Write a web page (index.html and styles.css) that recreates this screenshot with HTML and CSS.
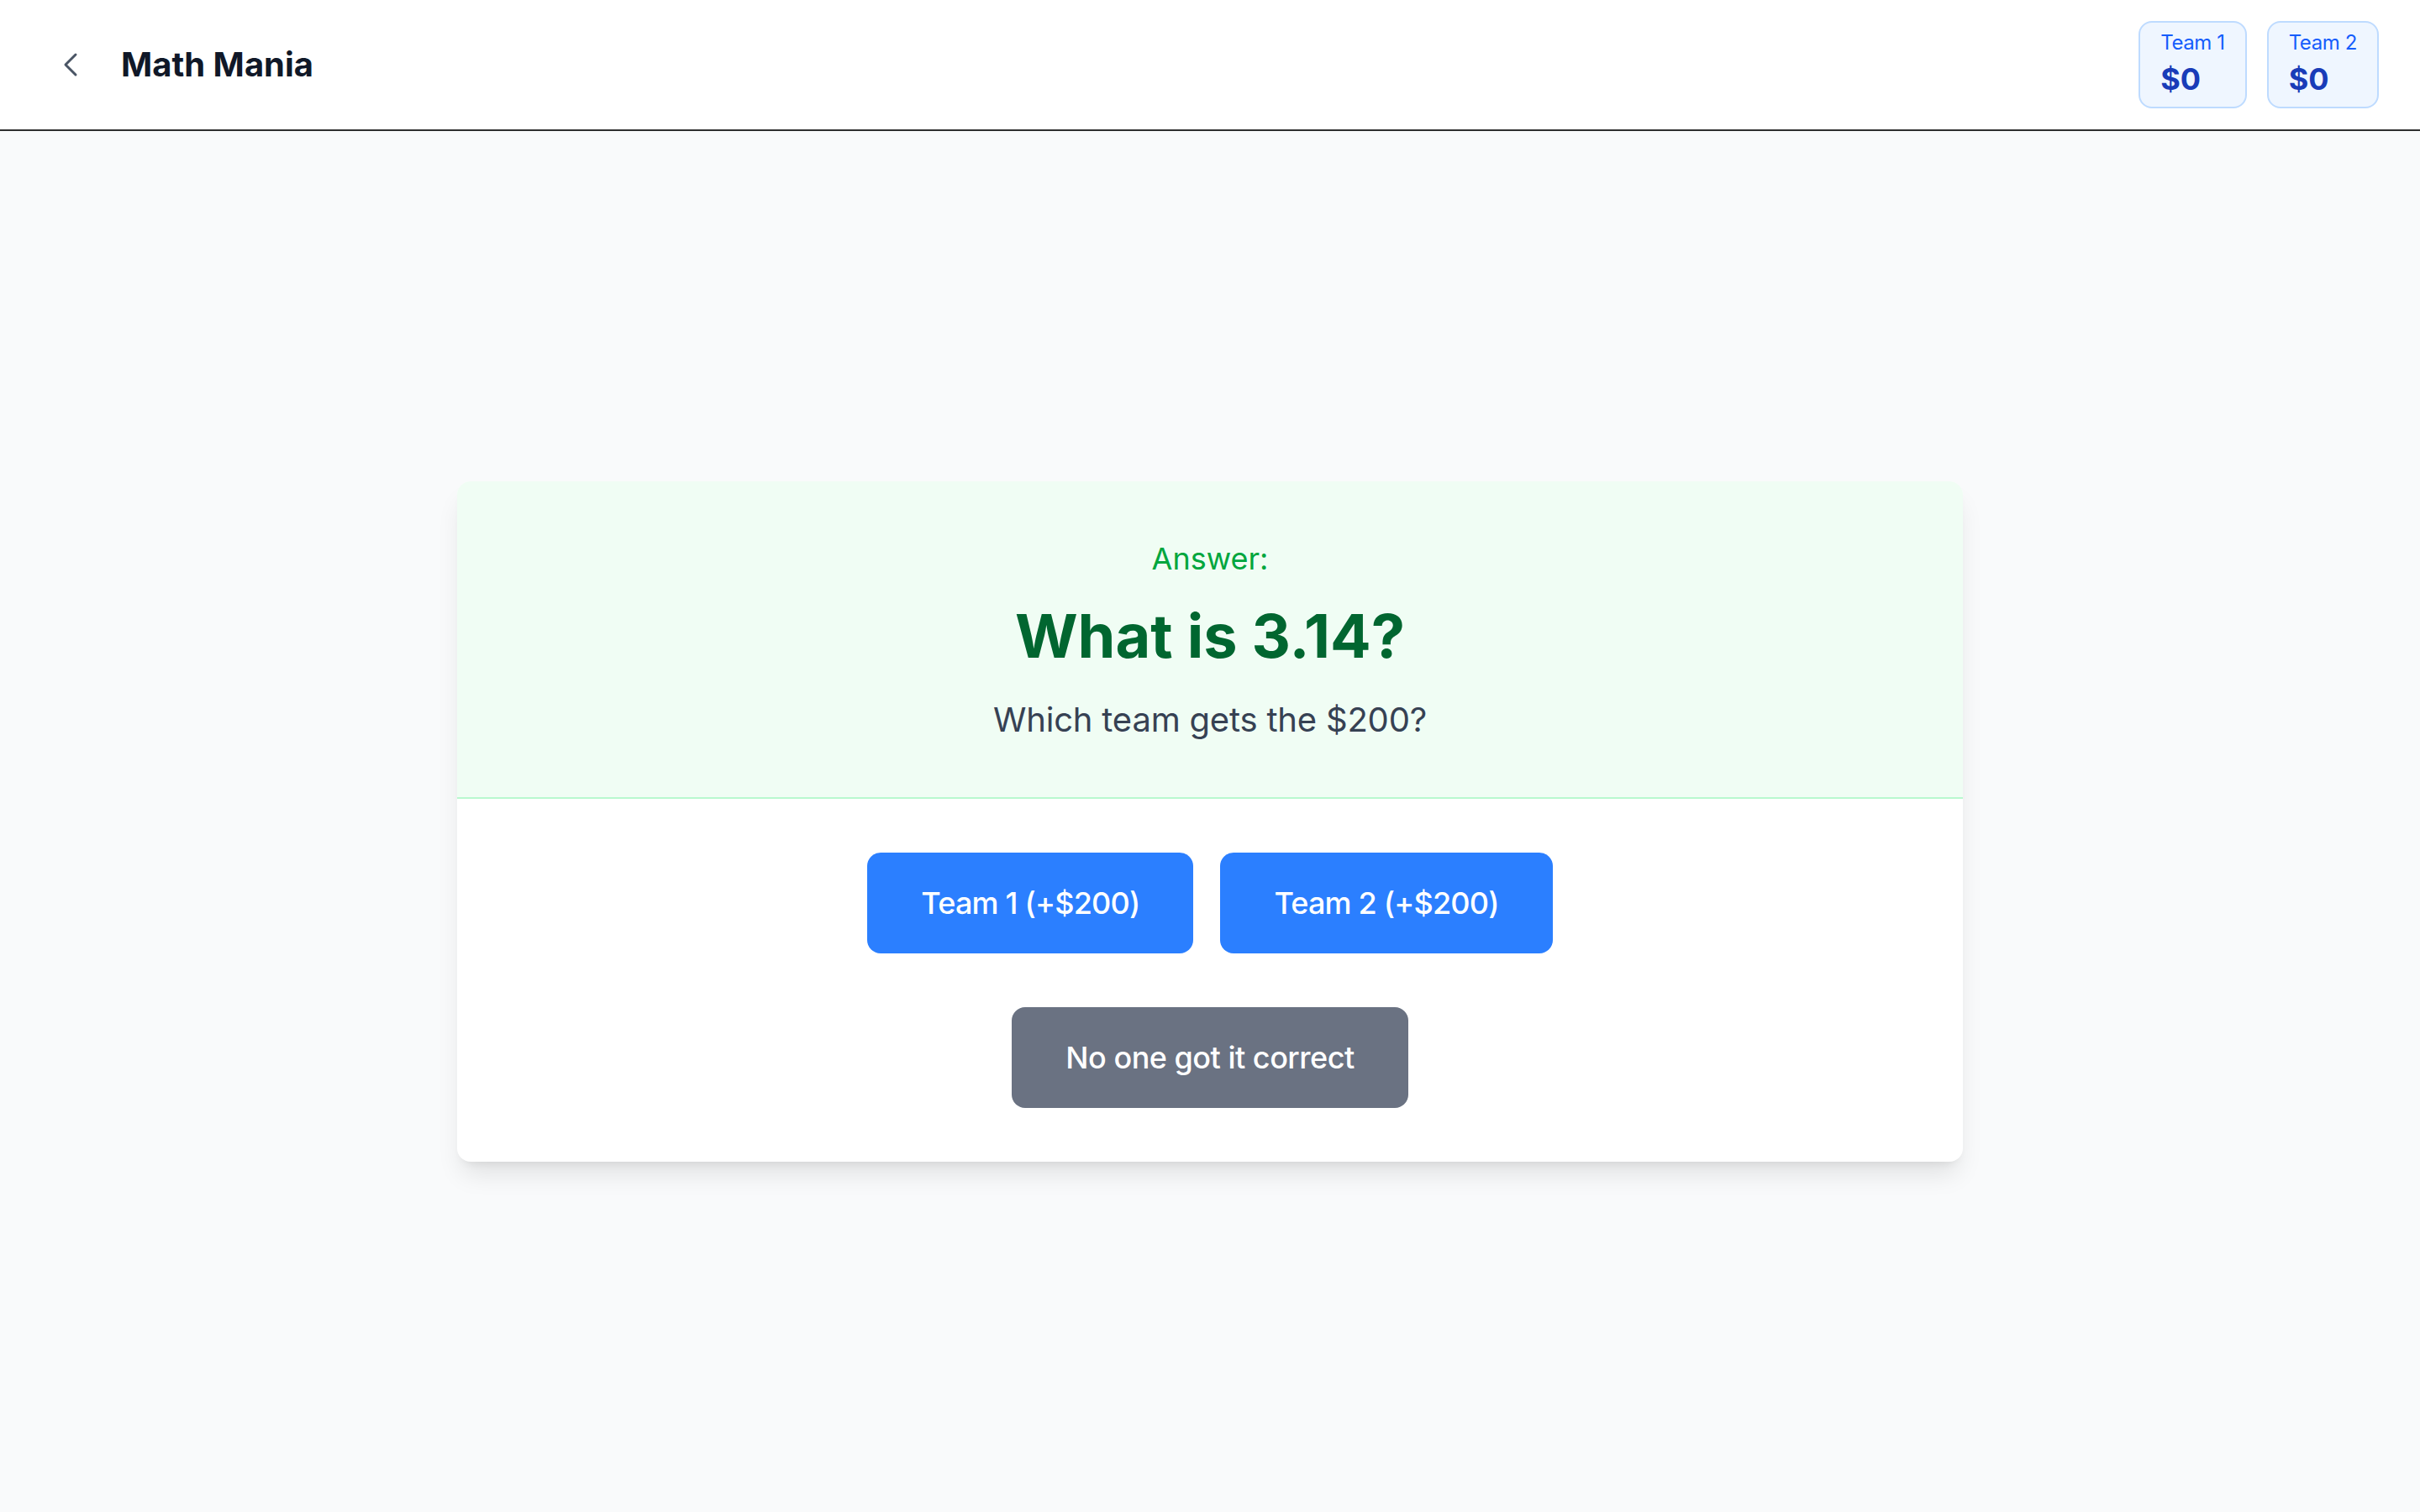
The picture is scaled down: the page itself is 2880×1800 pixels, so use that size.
FILE: index.html
```html
<!DOCTYPE html>
<html lang="en">
<head>
<meta charset="utf-8">
<title>Math Mania</title>
<link rel="stylesheet" href="styles.css">
</head>
<body>
<header class="topbar">
  <div class="topbar-left">
    <button class="back-btn" aria-label="Back">
      <svg width="48" height="48" viewBox="0 0 48 48" fill="none" stroke="#4a5565" stroke-width="3" stroke-linecap="round" stroke-linejoin="round"><polyline points="30,12 18,24 30,36"/></svg>
    </button>
    <h1 class="title">Math Mania</h1>
  </div>
  <div class="scores">
    <div class="score">
      <div class="score-name">Team 1</div>
      <div class="score-value">$0</div>
    </div>
    <div class="score">
      <div class="score-name">Team 2</div>
      <div class="score-value">$0</div>
    </div>
  </div>
</header>
<main class="main">
  <section class="card">
    <div class="answer">
      <div class="answer-label">Answer:</div>
      <h2 class="answer-text">What is 3.14?</h2>
      <p class="answer-question">Which team gets the $200?</p>
    </div>
    <div class="actions">
      <div class="team-row">
        <button class="btn btn-blue">Team 1 (+$200)</button>
        <button class="btn btn-blue">Team 2 (+$200)</button>
      </div>
      <div class="none-row">
        <button class="btn btn-gray">No one got it correct</button>
      </div>
    </div>
  </section>
</main>
</body>
</html>
```
FILE: styles.css
```css
* { box-sizing: border-box; }
html, body { margin: 0; padding: 0; }
body {
  font-family: Inter, "Liberation Sans", sans-serif;
  background: #f9fafb;
  min-height: 100vh;
  display: flex;
  flex-direction: column;
}
.topbar {
  height: 156px;
  background: #ffffff;
  border-bottom: 2px solid #2e2e2e;
  display: flex;
  align-items: center;
  justify-content: space-between;
  padding: 0 49px 0 48px;
}
.topbar-left {
  display: flex;
  align-items: center;
  gap: 24px;
}
.back-btn {
  border: 0;
  background: transparent;
  padding: 12px;
  display: flex;
  cursor: pointer;
}
.title {
  margin: 0;
  font-size: 40px;
  line-height: 56px;
  font-weight: 700;
  color: #101828;
  letter-spacing: 0;
}
.scores {
  display: flex;
  gap: 24px;
}
.score {
  background: #eff6ff;
  border: 2px solid #bedbff;
  border-radius: 16px;
  padding: 8px 24px 6px;
}
.score-name {
  font-size: 24px;
  line-height: 32px;
  color: #155dfc;
  letter-spacing: -0.4px;
}
.score-value {
  font-size: 36px;
  line-height: 54px;
  font-weight: 700;
  color: #193cb8;
}
.main {
  flex: 1;
  display: flex;
  align-items: center;
  justify-content: center;
  padding: 0 32px;
}
.card {
  width: 1792px;
  background: #ffffff;
  border-radius: 16px;
  overflow: hidden;
  box-shadow: 0 20px 30px -6px rgba(0,0,0,0.10), 0 8px 12px -8px rgba(0,0,0,0.10);
}
.answer {
  background: #f0fdf4;
  border-bottom: 2px solid #b9f8cf;
  padding: 64px;
  text-align: center;
}
.answer-label {
  font-size: 36px;
  line-height: 56px;
  color: #00a63e;
  margin-bottom: 24px;
}
.answer-text {
  margin: 0 0 32px;
  font-size: 72px;
  line-height: 80px;
  font-weight: 700;
  color: #016630;
}
.answer-question {
  margin: 0;
  font-size: 40px;
  line-height: 56px;
  color: #364153;
  letter-spacing: -0.2px;
}
.actions {
  padding: 64px;
  display: flex;
  flex-direction: column;
  align-items: center;
  gap: 64px;
}
.team-row {
  display: flex;
  gap: 32px;
  justify-content: center;
}
.none-row {
  display: flex;
  justify-content: center;
}
.btn {
  border: 0;
  border-radius: 16px;
  padding: 32px 64px;
  font-family: inherit;
  font-size: 36px;
  line-height: 56px;
  font-weight: 500;
  color: #ffffff;
  letter-spacing: -0.8px;
  cursor: pointer;
}
.btn-blue { background: #2b7fff; }
.btn-gray { background: #6a7282; letter-spacing: -0.5px; }
```
